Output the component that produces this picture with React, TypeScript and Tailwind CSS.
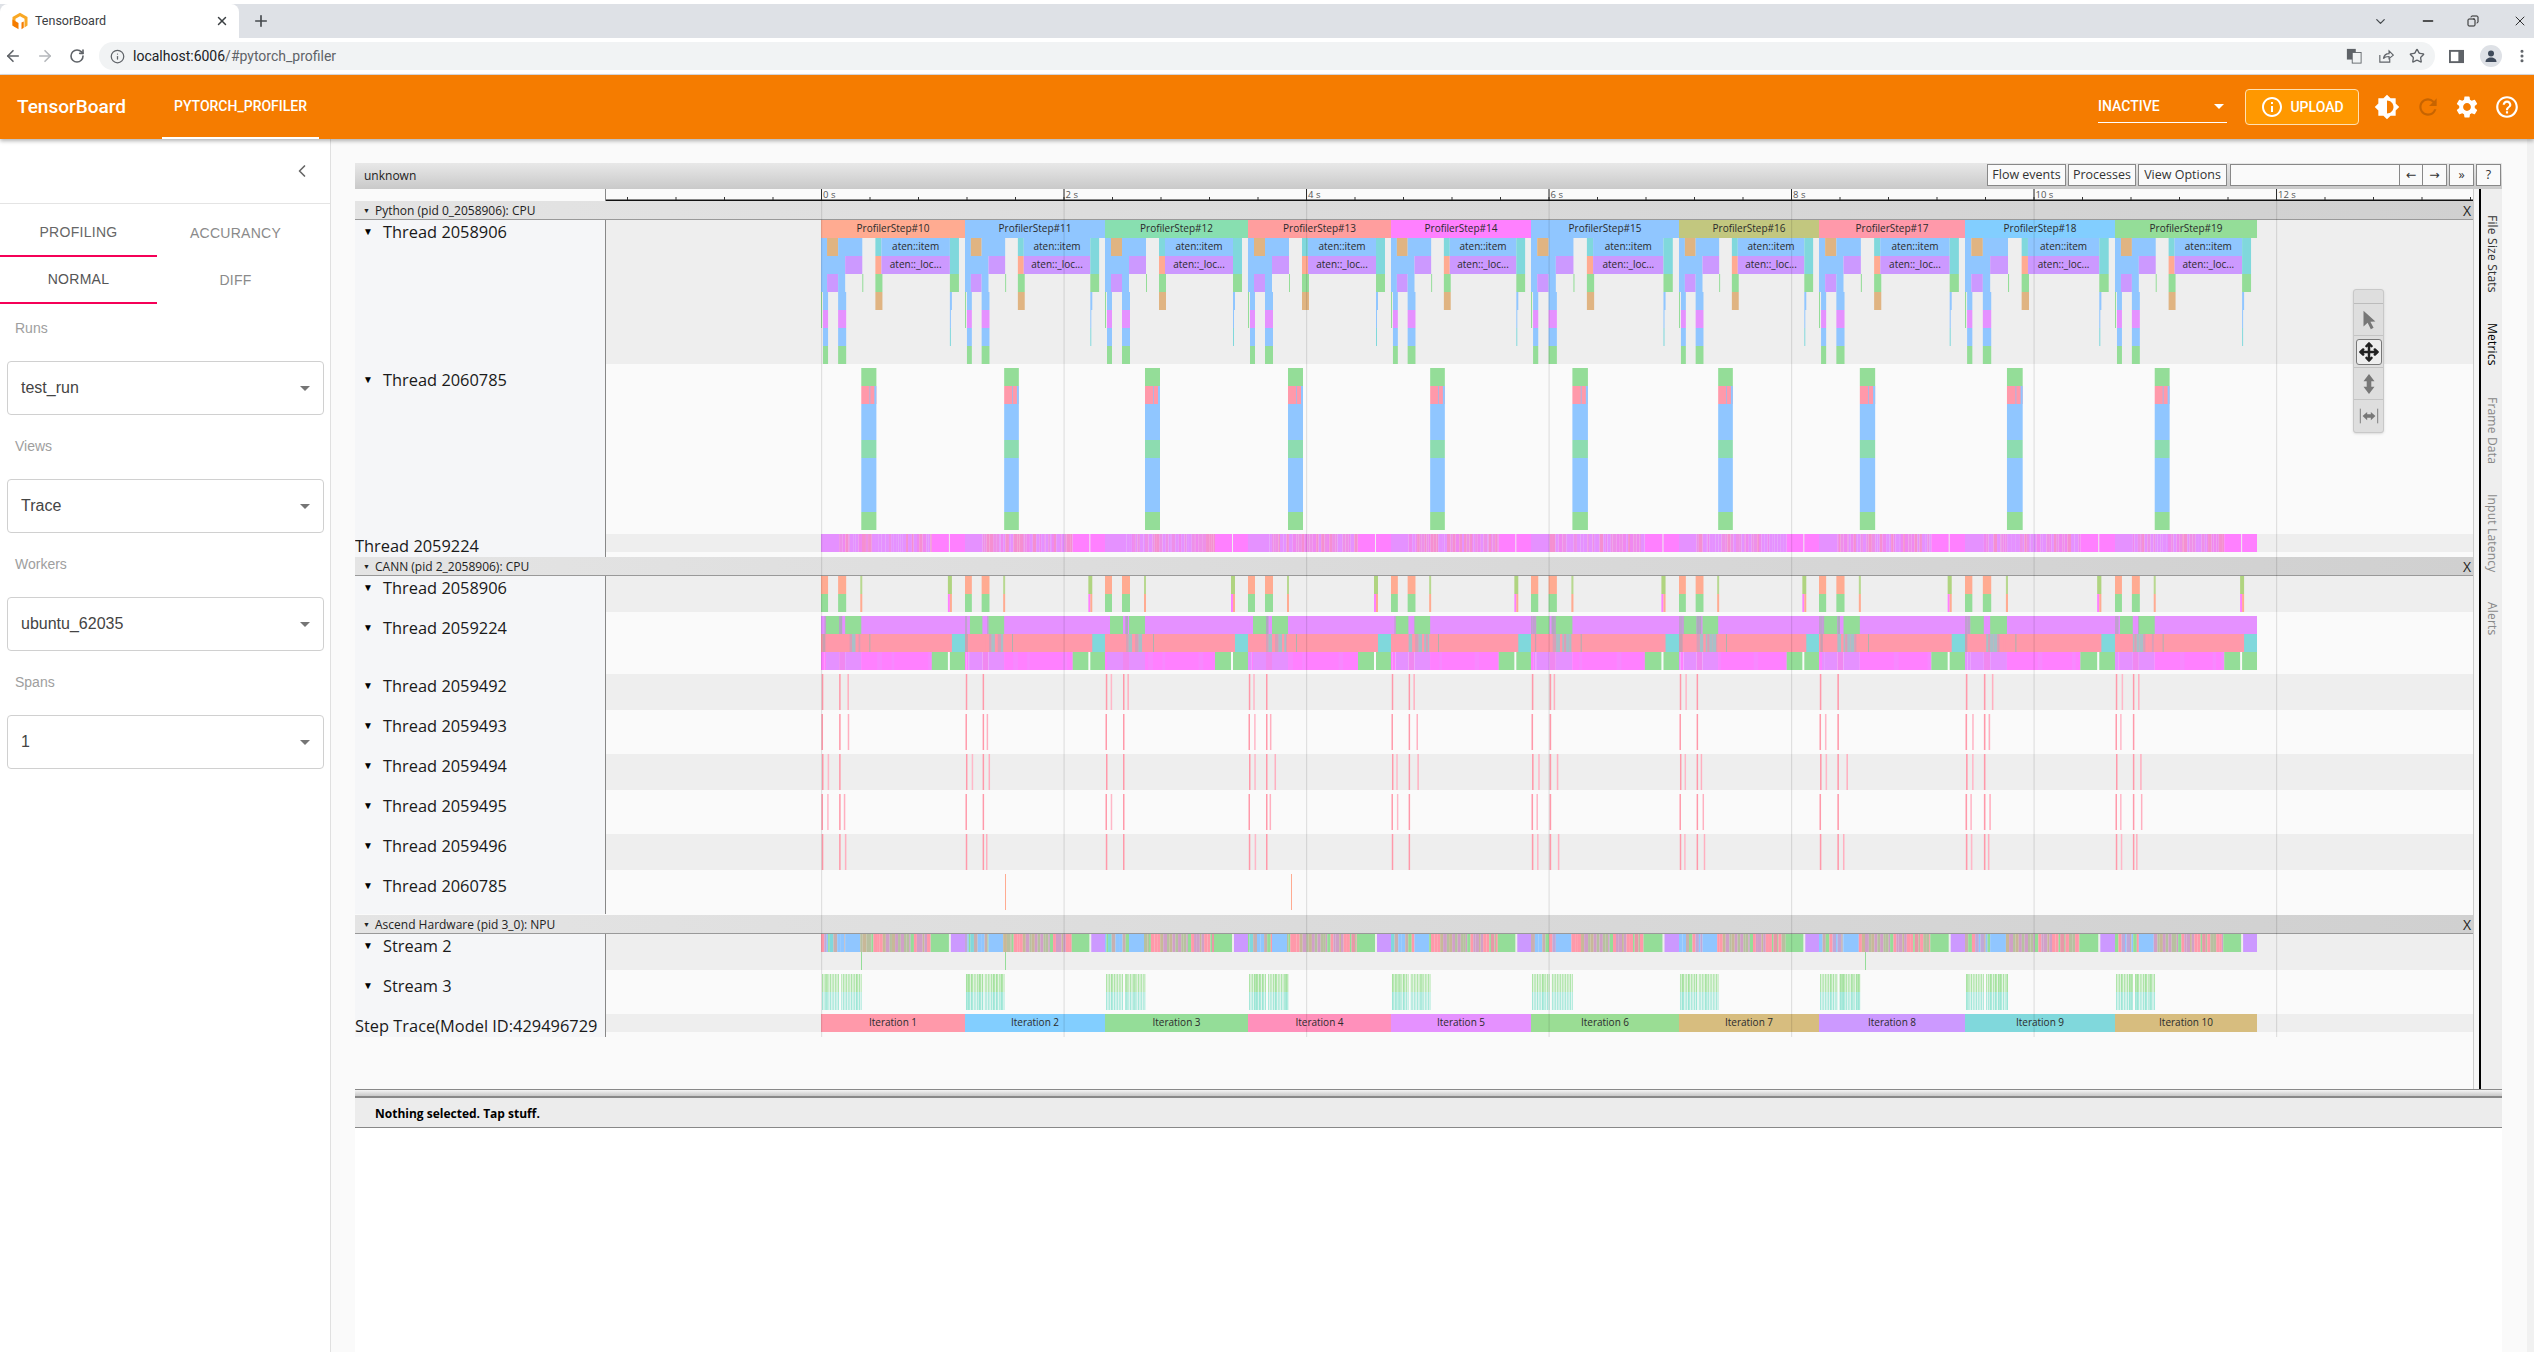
import { ArrowLeft, ArrowRight, ChevronDown, ChevronLeft, Copy, EllipsisVertical, Info, Minus, Move, Plus, RotateCw, Star, X } from "lucide-react";
import { MdBrightness6, MdHelpOutline, MdInfoOutline, MdRefresh, MdSettings } from "react-icons/md";

const blue = "#90c6ff";
const tan = "#e0b482";
const teal = "#80d8dc";
const purple = "#cc99ff";
const salmon = "#ffab91";
const green = "#94dd98";
const magenta = "#ff80ff";
const mauve = "#e591ff";
const pink = "#ff99aa";
const ROW = 18;
const CHART_LEFT = 606;
const CHART_W = 1867;

const STEPS = [821, 965, 1105, 1248, 1391, 1531, 1679, 1819, 1965, 2115, 2257];
const STEP_COLORS = ["#ffab91", "#90c6ff", "#88dfb0", "#ff9e9e", "#ff80ff", "#90c6ff", "#c2c77f", "#ff99aa", "#82ceff", "#94dd98"];
const ITER_COLORS = ["#ff99aa", "#82ceff", "#94dd98", "#ff90bb", "#e591ff", "#9add94", "#d7bd7f", "#cc99ff", "#80d8dc", "#d7bd7f"];
const MAJOR = [821, 1063.5, 1306, 1548.5, 1791, 2033.5, 2276];

// row, from, to, colour, label. offsets are px inside a 143px wide step
type Span = [number, number, number, string, string?];

function rand(seed: number) {
	const v = Math.sin(seed * 127.1 + 11.7) * 43758.5453;
	return v - Math.floor(v);
}

function stripes(row: number, from: number, to: number, colors: string[], seed: number, size = 2.2): Span[] {
	const out: Span[] = [];
	let x = from;
	let n = 0;
	while (x < to) {
		const w = size * (0.6 + rand(seed + n) * 1.2);
		out.push([row, x, Math.min(x + w, to), colors[Math.floor(rand(seed + n + 50) * colors.length)]]);
		x += w;
		n++;
	}
	return out;
}

function perStep(build: (i: number) => Span[]): Span[] {
	const out: Span[] = [];
	for (let i = 0; i < 10; i++) {
		const start = STEPS[i];
		const scale = (STEPS[i + 1] - start) / 143;
		for (const [row, a, b, color, label] of build(i)) {
			out.push([row, start + a * scale, Math.min(start + b * scale, STEPS[i + 1]), color, label]);
		}
	}
	return out;
}

const pythonMain = perStep(() => [
	[1, 0, 6, blue],
	[1, 6, 17, tan],
	[1, 17, 41, blue],
	[1, 54, 60, teal],
	[1, 60, 128, blue, "aten::item"],
	[1, 128, 137, teal],
	[2, 0, 24, blue],
	[2, 24, 41, purple],
	[2, 54, 60, salmon],
	[2, 60, 128, purple, "aten::_loc..."],
	[2, 128, 137, teal],
	[3, 0, 6, blue],
	[3, 6, 17, purple],
	[3, 17, 24, blue],
	[3, 41, 42, green],
	[3, 54, 61, green],
	[3, 128, 137, green],
	[4, 0, 1, green],
	[4, 2, 7, blue],
	[4, 17, 25, blue],
	[4, 54, 61, tan],
	[4, 128, 130, blue],
	[5, 0, 1, green],
	[5, 2, 7, mauve],
	[5, 17, 25, mauve],
	[5, 128, 129, blue],
	[6, 2, 7, blue],
	[6, 17, 25, blue],
	[6, 128, 129, teal],
	[7, 2, 7, green],
	[7, 17, 25, green],
]);
const stepBars: Span[] = STEP_COLORS.map((c, i) => [0, STEPS[i], STEPS[i + 1], c, `ProfilerStep#${i + 10}`]);

const python2060785 = perStep(() => [
	[0, 40, 55, green],
	[1, 40, 55, pink],
	[1, 48, 49, "#b0b4e0"],
	[1, 53, 55, blue],
	[2, 40, 55, blue],
	[3, 40, 55, blue],
	[4, 40, 55, "#8ddcb0"],
	[5, 40, 55, blue],
	[6, 40, 55, blue],
	[7, 40, 55, blue],
	[8, 40, 55, green],
]);

const python2059224 = perStep((i) => [
	[0, 0, 18, mauve],
	...stripes(0, 18, 110, [mauve, "#f58fd0", mauve, "#ee90e8", "#f088f0"], i * 100),
	[0, 110, 127, magenta],
	[0, 128, 144, magenta],
]);

const cann2058906 = perStep(() => [
	[0, 0, 7, salmon],
	[0, 17, 25, salmon],
	[0, 39, 41, "#b8d890"],
	[0, 126, 130, "#b0d480"],
	[1, 0, 7, green],
	[1, 17, 25, green],
	[1, 39, 41, salmon],
	[1, 126, 128, magenta],
	[1, 128, 130, salmon],
]);

const cann2059224 = perStep((i) => [
	[0, 0, 144, mauve],
	...stripes(0, 0, 5, ["#c0a0d0", mauve], i + 300),
	[0, 5, 18, green],
	...stripes(0, 18, 24, ["#b0a8c0", mauve], i + 320),
	[0, 24, 40, green],
	[1, 0, 144, pink],
	...stripes(1, 0, 5, ["#c8a0b0", pink], i + 340),
	...stripes(1, 18, 39, [pink, "#d8a0b8", "#a8c0c8", pink], i + 360),
	[1, 48, 49, "#b0b0b0"],
	[1, 130, 144, teal],
	...stripes(2, 0, 5, [magenta, mauve], i + 380),
	[2, 5, 18, mauve],
	[2, 18, 24, "#f088f0"],
	[2, 24, 40, mauve],
	[2, 40, 110, magenta],
	...stripes(2, 40, 110, [magenta, "#f888ff", magenta], i + 400, 4),
	[2, 110, 126, green],
	[2, 128, 144, green],
]);

function ticks(offsets: number[], salt: number) {
	return perStep((i) => {
		const out: Span[] = offsets.map((o) => [0, o, o + 1.5, pink] as Span);
		if (rand(i + salt) > 0.45) out.push([0, 5 + rand(i + salt + 5) * 2, 6.5 + rand(i + salt + 5) * 2, "#ffb8c8"]);
		if (rand(i + salt + 9) > 0.4) out.push([0, 21 + rand(i + salt + 3) * 6, 22.5 + rand(i + salt + 3) * 6, "#ffb0c0"]);
		return out;
	});
}

const stream2 = perStep((i) => [
	...stripes(0, 0, 24, [green, "#c0a8d8", pink, blue, "#c8b0b0", teal], i + 500),
	[0, 24, 39, blue],
	...stripes(0, 39, 109, [pink, "#c8b898", "#e898a8", "#b8c0a0", "#d0a0c8", green], i + 600),
	[0, 109, 127, green],
	[0, 129, 144, purple],
]);
stream2.push([1, 861, 862, green], [1, 1005, 1006, green], [1, 1865, 1866, green]);

const stream3 = perStep((i) => {
	const out: Span[] = [];
	for (let x = 1; x < 40; x += 1.6) {
		if (x > 18.5 && x < 20) continue;
		const w = rand(i * 7 + x) > 0.75 ? 1.6 : 0.9;
		out.push([0, x, x + w, "#a5e2a0"], [1, x, x + w, "#9ce6d6"]);
	}
	return out;
});

const iterations: Span[] = ITER_COLORS.map((c, i) => [0, STEPS[i], STEPS[i + 1], c, `Iteration ${i + 1}`]);

function Track({ spans, height, top = 0, bg }: { spans: Span[]; height: number; top?: number; bg: string }) {
	return (
		<svg width={CHART_W} height={height} className={`block shrink-0 ${bg} font-['Open_Sans']`}>
			{spans.map(([row, a, b, color, label], i) => (
				<g key={i}>
					<rect x={a - CHART_LEFT} y={top + row * ROW} width={b - a} height={ROW} fill={color} />
					{label && (
						<text x={(a + b) / 2 - CHART_LEFT} y={top + row * ROW + 12} textAnchor="middle" fontSize="10" fill="#2b2b2b">
							{label}
						</text>
					)}
				</g>
			))}
		</svg>
	);
}

function Label({ text, caret = true, pad = false }: { text: string; caret?: boolean; pad?: boolean }) {
	return (
		<div className={`w-[251px] shrink-0 overflow-hidden whitespace-nowrap border-r border-[#888] bg-[#f5f6f8] font-['Open_Sans'] text-[16.4px] leading-[23px] text-[#1a1a1a] ${pad ? "pt-1" : ""}`}>
			{caret ? (
				<div className="flex items-center">
					<span className="ml-[8px] w-[20px] text-[10px] text-black">▼</span>
					<span>{text}</span>
				</div>
			) : (
				text
			)}
		</div>
	);
}

function Row({ label, spans, rows, even, caret }: { label: string; spans: Span[]; rows: number; even?: boolean; caret?: boolean }) {
	const height = rows * ROW + (even ? 8 : 0);
	return (
		<div className="flex">
			<Label text={label} caret={caret} pad={even} />
			<Track spans={spans} height={height} top={even ? 4 : 0} bg={even ? "bg-[#fafafa]" : "bg-[#eeeeee]"} />
		</div>
	);
}

function ProcessHeader({ title }: { title: string }) {
	return (
		<div className="flex h-[19px] items-center justify-between border-b border-[#999] bg-linear-to-r from-[#e4e4e4] to-[#d0d0d0] pr-[2px] pt-[2px] font-['Open_Sans'] text-[12px] text-[#222]">
			<div className="flex items-center">
				<span className="ml-[8px] w-[12px] text-[7px]">▼</span>
				<span>{title}</span>
			</div>
			<span className="text-[14px] leading-none">X</span>
		</div>
	);
}

function Ruler() {
	const minor: number[] = [];
	for (let x = 627; x < 2473; x += 48.5) minor.push(x);
	return (
		<div className="flex h-[12px]">
			<div className="w-[251px] shrink-0 border-r border-[#888]" />
			<svg width={CHART_W} height={12} className="block font-['Open_Sans']">
				<rect x={0} y={10.5} width={CHART_W} height={1.5} fill="#111" />
				{minor.map((x) => (
					<rect key={x} x={x - CHART_LEFT} y={8} width={1} height={3} fill="#333" />
				))}
				{MAJOR.map((x, i) => (
					<g key={x}>
						<rect x={x - CHART_LEFT} y={0} width={1} height={11} fill="#333" />
						<text x={x - CHART_LEFT + 2} y={8.5} fontSize="9.5" fill="#555">
							{i * 2} s
						</text>
					</g>
				))}
			</svg>
		</div>
	);
}

function TopButton({ children, className = "" }: { children?: React.ReactNode; className?: string }) {
	return <div className={`flex h-[22px] items-center justify-center border border-[#888] bg-[#fafafa] text-[12.5px] text-[#333] ${className}`}>{children}</div>;
}

function MouseModeSelector() {
	return (
		<div className="absolute left-[1998px] top-[126px] flex w-[31px] flex-col items-center rounded-[3px] border border-[#c8c8c8] bg-[#dedede] shadow-sm">
			<div className="flex h-[14px] w-full items-center justify-center border-b border-[#bbb]">
				<div className="h-[5px] w-[22px] bg-[radial-gradient(#888_0.6px,transparent_0.7px)] bg-[length:2px_2px]" />
			</div>
			<div className="flex h-[32px] w-full items-center justify-center border-b border-[#c4c4c4]">
				<svg viewBox="0 0 24 24" className="h-[22px] w-[22px] fill-[#777]">
					<polygon points="6,2 6,19 10.5,15 14,22 17,20.5 13.5,13.8 19,13.5" />
				</svg>
			</div>
			<div className="flex h-[32px] w-full items-center justify-center border-b border-[#c4c4c4]">
				<div className="flex h-[26px] w-[26px] items-center justify-center rounded-[3px] border border-[#777] bg-[#eeeeee]">
					<Move size={20} strokeWidth={3} color="#222" />
				</div>
			</div>
			<div className="flex h-[32px] w-full items-center justify-center border-b border-[#c4c4c4]">
				<svg viewBox="0 0 24 24" className="h-[22px] w-[22px] fill-[#777]">
					<polygon points="12,1 18,9 14.5,9 14.5,15 18,15 12,23 6,15 9.5,15 9.5,9 6,9" />
				</svg>
			</div>
			<div className="flex h-[32px] w-full items-center justify-center">
				<svg viewBox="0 0 24 24" className="h-[22px] w-[22px] fill-[#777]">
					<rect x="2" y="4" width="1" height="16" />
					<rect x="21" y="4" width="1" height="16" />
					<polygon points="5,12 10,7.5 10,10 14,10 14,7.5 19,12 14,16.5 14,14 10,14 10,16.5" />
				</svg>
			</div>
		</div>
	);
}

function TraceViewer() {
	return (
		<div className="relative flex min-h-0 flex-1 flex-col">
			<div className="flex h-[26px] items-start justify-between bg-linear-to-b from-[#e8e8e8] to-[#c9c9c9] pt-px pr-px font-['Open_Sans']">
				<span className="pl-[9px] pt-[3px] text-[12px] text-[#222]">unknown</span>
				<div className="flex">
					<TopButton className="w-[79px]">Flow events</TopButton>
					<TopButton className="ml-[2px] w-[68px]">Processes</TopButton>
					<TopButton className="ml-[2px] w-[89px]">View Options</TopButton>
					<TopButton className="ml-[3px] w-[170px]" />
					<TopButton className="-ml-px w-[24px] font-['DejaVu_Sans']">←</TopButton>
					<TopButton className="-ml-px w-[25px] font-['DejaVu_Sans']">→</TopButton>
					<TopButton className="ml-[2px] w-[25px]">»</TopButton>
					<TopButton className="ml-[2px] w-[25px]">?</TopButton>
				</div>
			</div>
			<div className="relative flex min-h-0 flex-1">
				<div className="w-[2118px] min-w-0 shrink-0">
					<Ruler />
					<ProcessHeader title="Python (pid 0_2058906): CPU" />
					<Row label="Thread 2058906" rows={8} spans={[...stepBars, ...pythonMain]} />
					<Row label="Thread 2060785" rows={9} even spans={python2060785} />
					<div className="flex">
						<Label text="Thread 2059224" caret={false} />
						<div className="h-[23px]">
							<Track spans={python2059224} height={18} bg="bg-[#eeeeee]" />
						</div>
					</div>
					<ProcessHeader title="CANN (pid 2_2058906): CPU" />
					<Row label="Thread 2058906" rows={2} spans={cann2058906} />
					<Row label="Thread 2059224" rows={3} even spans={cann2059224} />
					<Row label="Thread 2059492" rows={2} spans={stretch(ticks([0.8, 18], 700))} />
					<Row label="Thread 2059493" rows={2} even spans={stretch(ticks([0.5, 18], 720))} />
					<Row label="Thread 2059494" rows={2} spans={stretch(ticks([1, 18], 740))} />
					<Row label="Thread 2059495" rows={2} even spans={stretch(ticks([0.5, 18], 760))} />
					<Row label="Thread 2059496" rows={2} spans={stretch(ticks([0.8, 18], 780))} />
					<Row label="Thread 2060785" rows={2} even spans={[[0, 1005, 1006, salmon], [1, 1005, 1006, salmon], [0, 1291, 1292, salmon], [1, 1291, 1292, salmon]]} />
					<div className="h-px" />
					<ProcessHeader title="Ascend Hardware (pid 3_0): NPU" />
					<Row label="Stream 2" rows={2} spans={stream2} />
					<Row label="Stream 3" rows={2} even spans={stream3} />
					<div className="flex">
						<Label text="Step Trace(Model ID:429496729" caret={false} />
						<div className="h-[22px]">
							<Track spans={iterations} height={18} bg="bg-[#eeeeee]" />
						</div>
					</div>
				</div>
				<div className="w-[6px] shrink-0 border-l border-[#ccc] bg-[#f6f6f6]" />
				<div className="flex flex-1 flex-col items-center border-l-2 border-black bg-[#eeeeee] pt-[26px] font-['Open_Sans'] text-[12px] tracking-[0.2px] text-[#888]">
					<span className="text-[#333] [writing-mode:vertical-rl]">File Size Stats</span>
					<span className="mt-[30px] text-black [writing-mode:vertical-rl]">Metrics</span>
					<span className="mt-[32px] [writing-mode:vertical-rl]">Frame Data</span>
					<span className="mt-[30px] [writing-mode:vertical-rl]">Input Latency</span>
					<span className="mt-[29px] [writing-mode:vertical-rl]">Alerts</span>
				</div>
				{/* major grid lines sit over the tracks */}
				<svg width={CHART_W} height={848} className="pointer-events-none absolute left-[251px] top-0">
					{MAJOR.map((x) => (
						<rect key={x} x={x - CHART_LEFT} y={0} width={1.2} height={848} fill="rgba(0,0,0,0.1)" />
					))}
				</svg>
			</div>
			<MouseModeSelector />
		</div>
	);
}

// thin ticks fill both rows of their track
function stretch(spans: Span[]): Span[] {
	return spans.flatMap(([, a, b, c]) => [[0, a, b, c] as Span, [1, a, b, c] as Span]);
}

function Select({ label, value }: { label: string; value: string }) {
	return (
		<div>
			<div className="h-[20px] pl-[15px] text-[14px] leading-[20px] text-[#9e9e9e]">{label}</div>
			<div className="ml-[7px] mr-[6px] mt-[23px] mb-[21px] flex h-[54px] items-center justify-between rounded-[4px] border border-[#d0d0d0] pl-[13px] pr-[13px] text-[16px] text-[#444]">
				<span>{value}</span>
				<span className="h-0 w-0 border-x-[5px] border-t-[5px] border-x-transparent border-t-[#757575]" />
			</div>
		</div>
	);
}

function Sidebar() {
	return (
		<aside className="flex w-[331px] shrink-0 flex-col border-r border-[#e0e0e0] bg-white font-['Liberation_Sans'] text-[14px] tracking-[0.02em]">
			<div className="flex h-[65px] items-center justify-end border-b border-[#e4e4e4] pr-[18px]">
				<ChevronLeft size={20} color="#666" />
			</div>
			<div className="grid w-[314px] grid-cols-2 text-center">
				<div className="flex h-[53px] items-center justify-center border-b-2 border-[#f50057] pt-[5px] text-[#666]">PROFILING</div>
				<div className="flex h-[53px] items-center justify-center pt-[5px] text-[#8a8a8a]">ACCURANCY</div>
				<div className="flex h-[47px] items-center justify-center border-b-2 border-[#f50057] text-[#555]">NORMAL</div>
				<div className="flex h-[47px] items-center justify-center text-[#8a8a8a]">DIFF</div>
			</div>
			<div className="pt-[14px] tracking-normal">
				<Select label="Runs" value="test_run" />
				<Select label="Views" value="Trace" />
				<Select label="Workers" value="ubuntu_62035" />
				<Select label="Spans" value="1" />
			</div>
		</aside>
	);
}

function BrowserChrome() {
	return (
		<div className="bg-white font-['Roboto'] text-[#3c4043]">
			<div className="h-[4px]" />
			<div className="flex h-[34px] items-stretch bg-[#dee1e6]">
				<div className="flex w-[239px] items-center rounded-t-[8px] bg-white pl-[11px] pr-[10px]">
					<svg viewBox="0 0 24 24" className="h-[18px] w-[18px]">
						<polygon points="12,1 22,6.5 22,18 18,20.500 18,9 12,5.500 6,9 6,20.500 2,18 2,6.500" fill="#f9a825" />
						<polygon points="2,10 10,14.500 10,23 2,18" fill="#f57c00" />
						<polygon points="14,14 17,12.500 17,21 14,23" fill="#f57c00" />
					</svg>
					<span className="ml-[6px] flex-1 text-[12.5px]">TensorBoard</span>
					<X size={14} strokeWidth={2.5} />
				</div>
				<div className="flex w-[44px] items-center justify-center">
					<Plus size={18} strokeWidth={2.2} color="#45494d" />
				</div>
				<div className="flex flex-1 items-center justify-end">
					<ChevronDown size={15} className="mr-[32px]" color="#45494d" />
					<Minus size={16} className="mr-[31px]" color="#222" />
					<Copy size={12} className="mr-[33px] -scale-x-100" color="#222" />
					<X size={16} strokeWidth={1.4} className="mr-[6px]" color="#222" />
				</div>
			</div>
			<div className="flex h-[37px] items-center border-b border-[#dadce0]">
				<ArrowLeft size={18} className="ml-[4px]" color="#5f6368" strokeWidth={2.2} />
				<ArrowRight size={18} className="ml-[14px]" color="#b5b8bc" strokeWidth={2.2} />
				<RotateCw size={16} className="ml-[15px]" color="#5f6368" strokeWidth={2.4} />
				<div className="ml-[14px] flex h-[28px] w-[2336px] items-center justify-between rounded-full bg-[#f1f3f4] pl-[11px] pr-[10px]">
					<div className="flex items-center">
						<Info size={15} color="#5f6368" />
						<span className="ml-[8px] text-[14px] text-[#202124]">
							localhost:6006<span className="text-[#5f6368]">/#pytorch_profiler</span>
						</span>
					</div>
					<div className="flex items-center gap-[15px]">
						<svg viewBox="0 0 18 18" className="h-[16px] w-[16px]">
							<rect x="1" y="1" width="10" height="12" fill="#5f6368" />
							<rect x="7" y="5" width="10" height="12" fill="#f1f3f4" stroke="#5f6368" />
						</svg>
						<svg viewBox="0 0 24 24" className="h-[17px] w-[17px] fill-none stroke-[#5f6368]" strokeWidth="1.6">
							<path d="M4 10v10h14v-5M9 15c1-5 4-7 8-7V4l6 6-6 5v-3c-3 0-6 0-8 3z" />
						</svg>
						<Star size={16} color="#5f6368" strokeWidth={2} />
					</div>
				</div>
				<svg viewBox="0 0 16 16" className="ml-[14px] h-[15px] w-[15px]">
					<rect x="1" y="2" width="14" height="12" fill="none" stroke="#5f6368" strokeWidth="2" />
					<rect x="10" y="2" width="5" height="12" fill="#5f6368" />
				</svg>
				<div className="ml-[16px] flex h-[22px] w-[22px] items-center justify-center rounded-full bg-[#dee1e6]">
					<svg viewBox="0 0 16 16" className="h-[16px] w-[16px] fill-[#3f4a5a]">
						<circle cx="8" cy="5.5" r="3" />
						<path d="M2.5 14c0-3 2.5-4.500 5.500-4.500s5.500 1.500 5.500 4.500z" />
					</svg>
				</div>
				<EllipsisVertical size={16} className="ml-[12px]" color="#5f6368" strokeWidth={2.6} />
			</div>
		</div>
	);
}

function AppBar() {
	return (
		<header className="relative z-10 flex h-[64px] shrink-0 items-center bg-[#f57c00] font-['Roboto'] text-white shadow-[0_2px_4px_rgba(0,0,0,0.3)]">
			<span className="ml-[17px] w-[110px] text-[19px] font-medium">TensorBoard</span>
			<div className="relative ml-[35px] flex h-full w-[157px] items-center justify-center border-b-2 border-white text-[14px] font-medium">
				PYTORCH_PROFILER
			</div>
			<div className="ml-auto flex items-center">
				<div className="flex h-[32px] w-[129px] items-center justify-between border-b border-white pr-[3px] text-[14px] font-medium">
					<span>INACTIVE</span>
					<span className="h-0 w-0 border-x-[5px] border-t-[5px] border-x-transparent border-t-white" />
				</div>
				<div className="ml-[18px] flex h-[36px] w-[114px] items-center justify-center gap-[6px] rounded-[4px] border border-[#ffe0b2] bg-[#ff9800] text-[14px] font-medium">
					<MdInfoOutline size={24} />
					<span>UPLOAD</span>
				</div>
				<MdBrightness6 size={26} className="ml-[15px]" />
				<MdRefresh size={26} className="ml-[15px]" color="#c76400" />
				<MdSettings size={26} className="ml-[13px]" />
				<MdHelpOutline size={26} className="ml-[14px] mr-[14px]" />
			</div>
		</header>
	);
}

export default function App() {
	return (
		<div className="flex h-screen w-full flex-col overflow-hidden bg-white">
			<BrowserChrome />
			<AppBar />
			<div className="flex min-h-0 flex-1">
				<Sidebar />
				<main className="flex min-w-0 flex-1 bg-[#fafafa]">
					<div className="flex w-[2171px] shrink-0 flex-col pl-[24px] pt-[24px]">
						<TraceViewer />
						<div className="flex h-[263px] shrink-0 flex-col">
							<div className="h-[9px] border-t border-[#888] border-b-2 border-b-[#888] bg-linear-to-b from-[#f4f4f4] to-[#c8c8c8]" />
							<div className="flex h-[30px] items-center border-b border-[#888] bg-[#ececec] pl-[20px] pt-[3px] font-['Open_Sans'] text-[12px] font-bold text-black">
								Nothing selected. Tap stuff.
							</div>
							<div className="flex-1 bg-white" />
						</div>
					</div>
					<div className="ml-auto w-[7px] bg-[#f1f1f1]" />
				</main>
			</div>
		</div>
	);
}
